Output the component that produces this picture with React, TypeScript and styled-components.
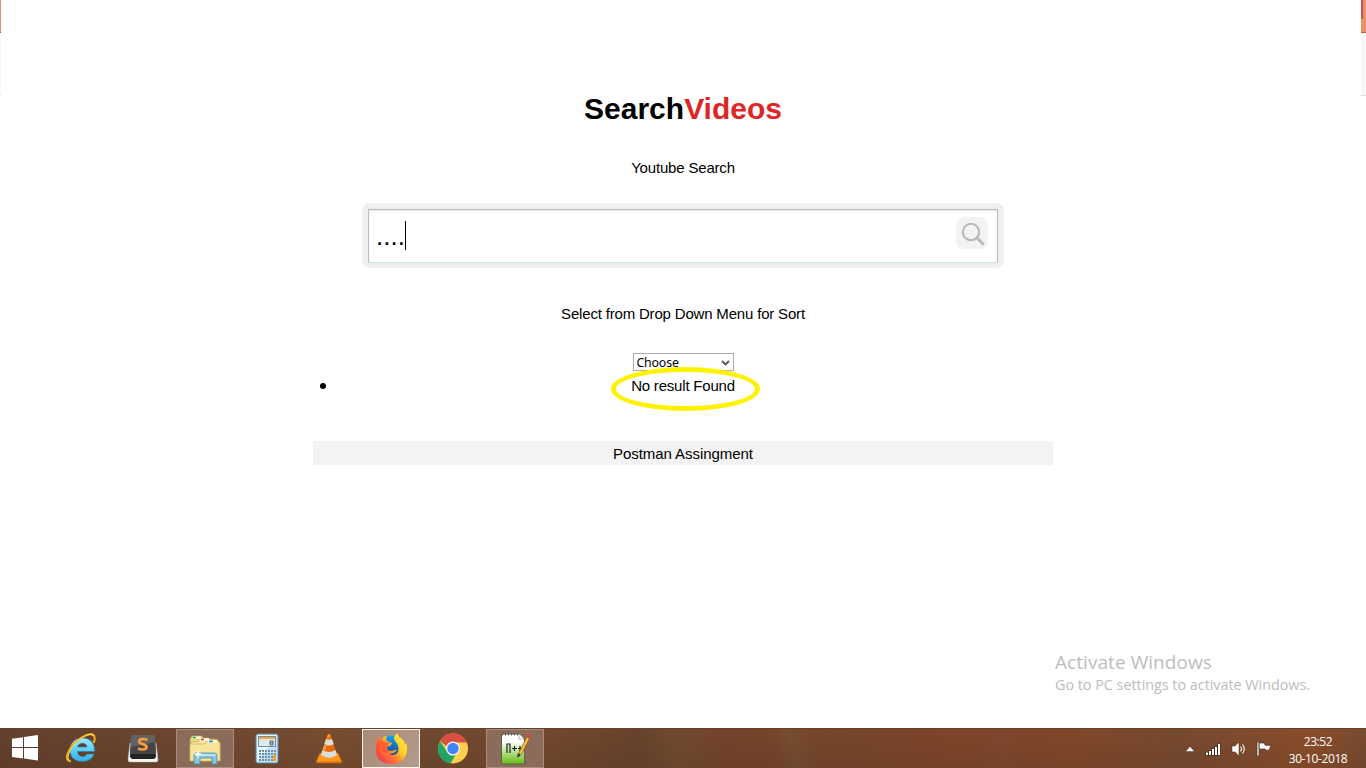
import React from "react";
import styled, { createGlobalStyle } from "styled-components";

const GlobalStyle = createGlobalStyle`
  * { box-sizing: border-box; }
  body { margin: 0; background: #fff; overflow: hidden; }
`;

const Desktop = styled.div`
  position: relative;
  display: flex;
  flex-direction: column;
  width: 1366px;
  height: 768px;
  background: #fff;
  color: #000;
  font: 15px/24px "Liberation Sans", Arial, sans-serif;
`;

const BrowserWindow = styled.div`
  display: flex;
  height: 728px;
`;

const WindowEdge = styled.div<{ $width: number }>`
  width: ${(p) => p.$width}px;
  height: 96px;
  background: linear-gradient(#ea9167 0 32px, #9e6548 32px 33px, #f8f8f8 33px 95px, #dedede 95px);
`;

const CloseRemnant = styled.div`
  width: 2px;
  height: 19px;
  background: #c95052;
`;

const Page = styled.main`
  flex: 1;
  display: flex;
  flex-direction: column;
  align-items: center;
  padding: 91px 0 0 4px;
`;

const Title = styled.h1`
  margin: 0;
  font-size: 30px;
  line-height: 36px;
  span { color: #dc2726; }
`;

const Caption = styled.p<{ $top: number }>`
  margin: ${(p) => p.$top}px 0 0;
  height: 24px;
  letter-spacing: -0.18px;
`;

const SearchBox = styled.div`
  display: flex;
  width: 642px;
  height: 65px;
  margin-top: 23px;
  padding: 6px 6px 5px;
  border-radius: 8px;
  background: #efefef;
`;

const SearchField = styled.div`
  flex: 1;
  display: flex;
  justify-content: space-between;
  align-items: flex-start;
  padding: 7px 9px 0 7px;
  border: 1px solid #bdbdbd;
  border-bottom-color: #cfe0e6;
  background: #fff;
  box-shadow: inset 0 1px 2px #e4e4e4;
`;

const Query = styled.span`
  display: flex;
  align-items: flex-start;
  height: 36px;
  font-size: 26px;
  line-height: 39px;
`;

const Caret = styled.i`
  width: 1px;
  height: 29px;
  margin-top: 4px;
  background: #000;
`;

const SearchButton = styled.button`
  display: flex;
  width: 32px;
  height: 32px;
  padding: 0;
  border: 0;
  border-radius: 7px;
  background: #f3f3f3;
`;

const SortSelect = styled.div`
  display: flex;
  justify-content: space-between;
  align-items: center;
  width: 101px;
  height: 18px;
  margin-top: 27px;
  padding: 2px 3px 0 3px;
  border: 1px solid #ababab;
  font: 12.3px/16px "Noto Sans", sans-serif;
  letter-spacing: -0.15px;
`;

const Results = styled.ul`
  display: flex;
  width: 740px;
  height: 24px;
  margin: 3px 0 0;
  padding: 0;
  list-style: none;
`;

const Result = styled.li`
  position: relative;
  flex: 1;
  display: flex;
  align-items: center;
  justify-content: center;
  height: 24px;
  letter-spacing: -0.2px;
  &::before {
    content: "";
    position: absolute;
    left: 7px;
    top: 9px;
    width: 6px;
    height: 6px;
    border-radius: 50%;
    background: #000;
  }
`;

const Highlight = styled.div`
  position: absolute;
  left: 298px;
  top: -7px;
  width: 149px;
  height: 44px;
  border: 5px solid #fff200;
  border-radius: 50%;
`;

const Footer = styled.footer`
  width: 740px;
  height: 24px;
  margin-top: 43px;
  padding-top: 1px;
  background: #f3f3f3;
  text-align: center;
  letter-spacing: -0.05px;
`;

const Watermark = styled.div`
  position: absolute;
  left: 1055px;
  top: 650px;
  color: #bdbdbd;
  font-family: "Open Sans", sans-serif;
  white-space: nowrap;
`;

const WatermarkTitle = styled.div`
  font-size: 19px;
  line-height: 24px;
  letter-spacing: 0.06px;
`;

const WatermarkText = styled.div`
  font-size: 14.4px;
  line-height: 22px;
  letter-spacing: -0.03px;
`;

const Taskbar = styled.footer`
  display: flex;
  height: 40px;
  border-top: 1px solid #64402b;
  background:
    linear-gradient(#7a452800, #35201520),
    linear-gradient(75deg, transparent 752px, #76583877 772px, transparent 796px),
    linear-gradient(90deg, transparent 985px, #80493555 988px 1012px, transparent 1016px),
    linear-gradient(90deg, #64402e 0, #69442e 120px, #784d31 340px, #704930 430px, #72482d 550px, #68432c 640px, #704b2f 680px, #75432b 725px, #76462b 850px, #7d452a 930px, #80482a 1080px, #774a30 1180px, #824c2d 1260px, #8b4d29 1310px, #784b31 1366px);
`;

const StartButton = styled.div`
  display: flex;
  width: 50px;
  height: 38px;
  align-items: center;
  justify-content: center;
`;

const TaskButton = styled.div<{ $state?: "open" | "active" }>`
  display: flex;
  align-items: center;
  justify-content: center;
  width: 58px;
  height: 39px;
  margin: 0 2px;
  border: 1px solid ${(p) => (p.$state === "active" ? "#fff7ef" : p.$state ? "#a98d7d" : "transparent")};
  background: ${(p) => (p.$state === "active" ? "linear-gradient(120deg, #a98b79, #b39a8a)" : p.$state ? "#8b6c5a" : "transparent")};
`;

const Tray = styled.div`
  display: flex;
  align-items: center;
  gap: 10px;
  margin-left: auto;
`;

const Clock = styled.div`
  width: 60px;
  margin: 0 18px 0 6px;
  padding-top: 2px;
  color: #fff;
  text-align: center;
  font: 12px/17px "Open Sans", sans-serif;
  letter-spacing: -0.4px;
  white-space: nowrap;
`;

const WindowsLogo = () => (
  <svg width="28" height="28" viewBox="0 0 28 28" fill="#fff">
    <path d="M1 4.800 12 3.200V13H1zM13 3 27 1v12H13zM1 14h11v10.500L1 23zM13 14h14v12.500L13 24.600z" />
  </svg>
);

const ExplorerBrowser = () => (
  <svg width="32" height="32" viewBox="0 0 32 32">
    <defs>
      <linearGradient id="ie" x2="0" y2="1"><stop stopColor="#9beaff" /><stop offset=".5" stopColor="#5ed0f7" /><stop offset="1" stopColor="#36aee5" /></linearGradient>
    </defs>
    <path fill="url(#ie)" stroke="#277fa9" strokeWidth=".6" d="M29.500 18.500H12.500c.2 6 7.500 6.500 9.500 2.500h7c-2 5.500-6 7.500-11.500 7.500-8 0-12.500-4.500-12.500-11.500C5 10 10 5 17 5c9 0 13 6 12.500 13.500zM12.500 14H22c-.4-5-8.700-5-9.500 0z" />
    <path fill="none" stroke="#e8aa16" strokeWidth="2.200" d="M6 28C-2 29 3 15 12 8S28-1 29.500 4c.5 2.500-.5 5-1 6" />
    <path fill="none" stroke="#ffe464" strokeWidth=".9" d="M3.500 27C1 23 7 13 14 7S27 0 28.800 3" />
  </svg>
);

const SublimeIcon = () => (
  <svg width="32" height="32" viewBox="0 0 32 32">
    <path fill="#f5f5f5" stroke="#bbb" strokeWidth=".5" d="M3 10h26l2 17q0 2-2 2H3q-2 0-2-2z" />
    <path fill="#222" d="M4 8h24l1 16-2 2H5l-2-2z" />
    <path fill="#626264" d="M6 2h20q2 0 2 2l1 17H3L4 4q0-2 2-2z" />
    <path fill="#454547" d="m4 14 24-5 1 12H3z" />
    <path fill="none" stroke="#f99b3e" strokeWidth="2.700" d="M20.500 7C14 4.500 11 7.500 12.500 9.500c1.500 2 7 1.500 7 4.500 0 3-5 3-8.500 1.500" />
  </svg>
);

const FolderIcon = () => (
  <svg width="34" height="32" viewBox="0 0 34 32">
    <path fill="#ecd27c" stroke="#bd9b49" strokeWidth=".7" d="M2 28V6l2-3h10l2 3h13l3 4v18z" />
    <path fill="#f7e9a5" stroke="#c6a858" strokeWidth=".6" d="M3 27V9h7l2-4h9l2 4h9v18z" />
    <path fill="#f8e59b" stroke="#c4a657" strokeWidth=".6" d="M2 28V11h15l2-4h10l3 4v17z" />
    <path stroke="#fff" strokeWidth="2" d="M5 4.500h8m0 2h8m-1 2h9" />
    <path stroke="#0cb16b" strokeWidth="1.500" d="M5 4.500h3" /><path stroke="#d8482f" strokeWidth="1.500" d="M13 6.500h3" /><path stroke="#178dd5" strokeWidth="1.500" d="M21 8.500h4" />
    <path fill="#8bc5df" stroke="#438eb4" strokeWidth=".8" d="M6 31V22q0-2 2-2h18q3 0 3 2v9h-5v-6H12v6z" />
    <path fill="#bce3f2" d="M7 21h20l1 2H7z" />
    <path fill="#fff" d="m10 15 .8 5 4.200 1-4.200 1-.8 5-.8-5L5 21l4.200-1z" />
  </svg>
);

const CalculatorIcon = () => (
  <svg width="24" height="32" viewBox="0 0 24 32">
    <rect x="1" y="1" width="22" height="29" rx="2" fill="#c7e2f4" stroke="#568eb5" />
    <path fill="#edf8fd" d="M2 2h20L2 29z" />
    <rect x="3.500" y="3.500" width="17" height="10" fill="#dce9ed" stroke="#7091a4" />
    <path fill="#f9a33e" d="M4 4h16v2H4z" />
    <path fill="none" stroke="#4b6072" d="M15 8h3v4h-3zM15 10h3" />
    <g fill="#688fad">
      {[17, 20, 23, 26].flatMap((y) => [4, 7, 10, 13, 16, 19].map((x) => <rect key={`${x}-${y}`} x={x} y={y} width="2" height="2" />))}
    </g>
    <path fill="#f5a329" d="M18 22h3v6h-3z" />
  </svg>
);

const ConeIcon = () => (
  <svg width="28" height="32" viewBox="0 0 28 32">
    <path fill="#ef7b14" stroke="#c85d0a" strokeWidth=".6" d="m5 20-4 9q0 1 2 1h22q2 0 2-1l-4-9z" />
    <path fill="#ff991b" d="m5 21-3 7h24l-3-7z" />
    <path fill="#e66c0b" d="M12.500 1.500q1.500-1.500 3 0L22 22q-8 6-16 0z" />
    <path fill="#ddddda" d="m11 6-1.700 5q4.700 3 9.400 0L17 6q-3 1.500-6 0zM7.500 17 6 22q8 6 16 0l-1.500-5q-6.500 4-13 0z" />
    <path fill="#ff9b37" d="m13 2-1 3h2l1-4zM9 12l-1.500 4.500 3 1 1-5z" />
  </svg>
);

const FirefoxIcon = () => (
  <svg width="32" height="32" viewBox="0 0 32 32">
    <defs>
      <linearGradient id="fox" x1="1" x2="0" y2="1"><stop stopColor="#fff34b" /><stop offset=".4" stopColor="#ffcb25" /><stop offset=".62" stopColor="#ff7832" /><stop offset="1" stopColor="#ef235b" /></linearGradient>
      <linearGradient id="globe" x2="0" y2="1"><stop stopColor="#0fa6ed" /><stop offset="1" stopColor="#1e358b" /></linearGradient>
    </defs>
    <circle cx="15.500" cy="14" r="11.500" fill="url(#globe)" />
    <path fill="url(#fox)" d="M3 4c1 2 3 2 4 2 1-2 3-3 5-3-1 2-1 4 0 5l5 2-1 2-4 2c-1 2 1 4 4 4 3 0 4-2 6-1-2 3-6 4-8 4 7 3 11-2 9-8-1-4-4-5-4-8 0-2 2-4 3-5 1 4 5 5 7 8l1 4 1-2c4 11-3 21-14 21C6 31 1 25 1 18 1 12 2 8 3 4z" />
    <path fill="#ff4932" d="M3 5c2 2 5 1 5 3l4 1 4 1-4 3c-2 2 0 5 3 6-5 2-9 0-9-5-2 3-1 9 3 12-9-3-10-12-6-21z" opacity=".65" />
  </svg>
);

const ChromeIcon = () => (
  <svg width="32" height="32" viewBox="0 0 32 32">
    <circle cx="16" cy="15.500" r="15" fill="#ffd04b" />
    <path fill="#d94f42" d="M3 8A15 15 0 0 1 29.700 9.500H16a6.500 6.500 0 0 0-6 4z" />
    <path fill="#20a565" d="M3 8 10.500 19.500a6.500 6.500 0 0 0 8 2.500L13.500 30.500A15 15 0 0 1 3 8z" />
    <circle cx="16" cy="15.500" r="7" fill="#f5f5f5" /><circle cx="16" cy="15.500" r="5.700" fill="#4385f5" />
  </svg>
);

const NotepadIcon = () => (
  <svg width="32" height="32" viewBox="0 0 32 32">
    <defs><linearGradient id="paper" x2="0" y2="1"><stop offset=".25" stopColor="#fff" /><stop offset="1" stopColor="#65bd12" /></linearGradient></defs>
    <path fill="url(#paper)" stroke="#586744" d="M2.500 1h18l5 5v25h-23z" />
    <path fill="#fff" stroke="#888" strokeWidth=".6" d="M20 1v5h5" />
    <path stroke="#555" strokeWidth="2" strokeDasharray="1 2" d="M3 1.500h17" />
    <path fill="none" stroke="#222" strokeWidth="1.200" d="M8 20v-9h3v9m2-4.500h5m-2.500-2.500v5m3.500-2.500h4m-2-2.500v5" />
    <path stroke="#995916" strokeWidth="3.600" d="M30 3 21 21" />
    <path stroke="#f7c541" strokeWidth="2.300" d="m29 5-8 16" />
    <path stroke="#d34b43" strokeWidth="4" d="m30 1-1 3" /><path fill="#333" d="m19 20 3 2-4 3z" />
  </svg>
);

const TrayIcons = () => (
  <>
    <svg width="10" height="6" viewBox="0 0 10 6"><path fill="#fff" stroke="#3b251a" strokeWidth=".4" d="M.5 5.500 5 .5l4.500 5z" /></svg>
    <svg width="16" height="14" viewBox="0 0 16 14"><path fill="none" stroke="#39251b" strokeWidth="3" d="M2 10v3.500m3-5v5m3-7v7m3-9v9m3-12v12" /><path fill="none" stroke="#fff" strokeWidth="2" d="M2 10.500V13m3-4v4m3-6v6m3-8v8m3-11v11" /></svg>
    <svg width="15" height="16" viewBox="0 0 15 16"><path fill="#fff" stroke="#39251b" strokeWidth=".5" d="M1 5h3l4-4v14l-4-4H1z" /><path fill="none" stroke="#fff" strokeWidth="1.100" d="M9.500 5.500q2 2.500 0 5M11.500 3.500q3.500 4.500 0 9" /></svg>
    <svg width="16" height="16" viewBox="0 0 16 16"><path fill="#fff" stroke="#39251b" strokeWidth=".6" d="M1 1h2v14H1zM3 2h5l1 2q3 1 6 0l-2 5q-3 1-4-1H3z" /></svg>
  </>
);

export default function App() {
  return (
    <Desktop>
      <GlobalStyle />
      <BrowserWindow>
        <WindowEdge $width={1} />
        <Page>
          <Title>Search<span>Videos</span></Title>
          <Caption $top={29}>Youtube Search</Caption>
          <SearchBox>
            <SearchField>
              <Query>....<Caret /></Query>
              <SearchButton aria-label="Search">
                <svg width="32" height="32" viewBox="0 0 32 32" fill="none" stroke="#b9b9b9">
                  <circle cx="15" cy="15" r="8.200" strokeWidth="2.100" />
                  <path d="m21 21 5.800 5.800" strokeWidth="3" strokeLinecap="round" />
                </svg>
              </SearchButton>
            </SearchField>
          </SearchBox>
          <Caption $top={34}>Select from Drop Down Menu for Sort</Caption>
          <SortSelect>
            Choose
            <svg width="9" height="8" viewBox="0 0 9 8"><path d="m1 2 3.500 3.500L8 2" fill="none" stroke="#555" strokeWidth="1.800" /></svg>
          </SortSelect>
          <Results><Result>No result Found<Highlight /></Result></Results>
          <Footer>Postman Assingment</Footer>
        </Page>
        <WindowEdge $width={5}><CloseRemnant /></WindowEdge>
      </BrowserWindow>
      <Watermark>
        <WatermarkTitle>Activate Windows</WatermarkTitle>
        <WatermarkText>Go to PC settings to activate Windows.</WatermarkText>
      </Watermark>
      <Taskbar>
        <StartButton><WindowsLogo /></StartButton>
        <TaskButton><ExplorerBrowser /></TaskButton>
        <TaskButton><SublimeIcon /></TaskButton>
        <TaskButton $state="open"><FolderIcon /></TaskButton>
        <TaskButton><CalculatorIcon /></TaskButton>
        <TaskButton><ConeIcon /></TaskButton>
        <TaskButton $state="active"><FirefoxIcon /></TaskButton>
        <TaskButton><ChromeIcon /></TaskButton>
        <TaskButton $state="open"><NotepadIcon /></TaskButton>
        <Tray><TrayIcons /><Clock>23:52<br />30-10-2018</Clock></Tray>
      </Taskbar>
    </Desktop>
  );
}
